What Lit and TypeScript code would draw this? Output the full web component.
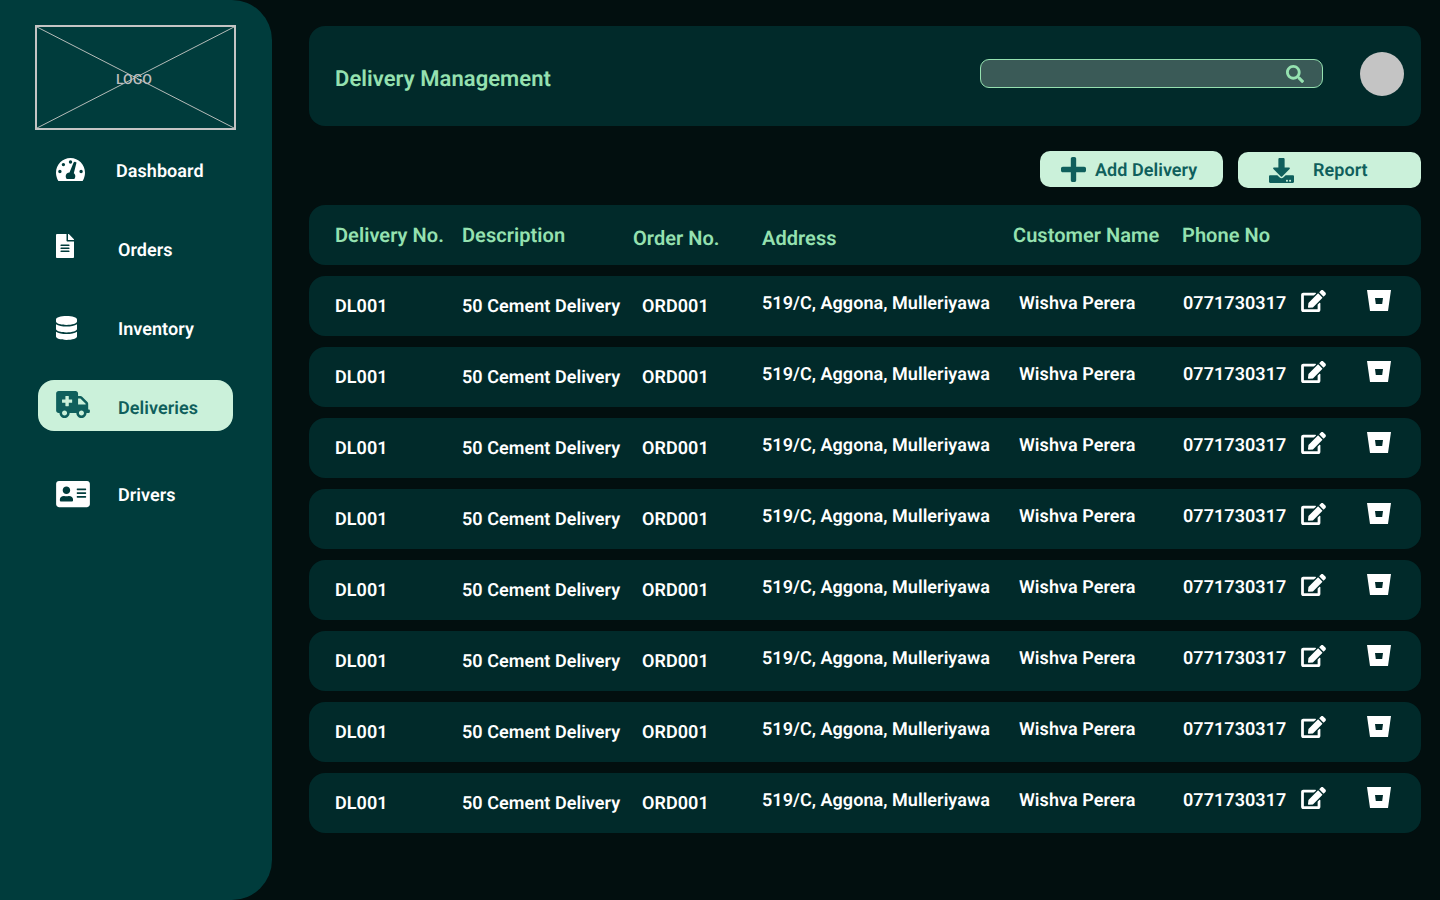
import { LitElement, html, css, svg } from 'lit';
import { customElement } from 'lit/decorators.js';

const icons = {
  gauge: svg`<path fill-rule="evenodd" d="M14.5 0C6.5 0 0 6.6 0 14.7c0 3 .9 5.900 2.400 8.300h24.200c1.500-2.400 2.400-5.300 2.400-8.300C29 6.600 22.500 0 14.500 0zM14.500 2.300a1.700 1.700 0 1 1 0 3.400 1.700 1.700 0 0 1 0-3.400zM7.400 4.900a1.700 1.700 0 1 1 0 3.400 1.700 1.700 0 0 1 0-3.400zM3.900 11.800a1.700 1.700 0 1 1 0 3.400 1.700 1.700 0 0 1 0-3.400zM25.100 11.800a1.700 1.700 0 1 1 0 3.400 1.700 1.700 0 0 1 0-3.400zM20.400 5.100l-2.600 10.200c.9.700 1.500 1.800 1.500 3 0 1-.4 1.900-1 2.600h-7.600c-.6-.7-1-1.600-1-2.600 0-2.100 1.700-3.800 3.800-3.800l4-9.700c.3-.8 1.200-1.100 1.900-.9.700.2 1.200.4 1 1.200z"/>`,
  file: svg`<path d="M224 136V0H24C10.700 0 0 10.700 0 24v464c0 13.300 10.700 24 24 24h336c13.300 0 24-10.700 24-24V160H248c-13.200 0-24-10.800-24-24zm64 236c0 6.600-5.400 12-12 12H108c-6.600 0-12-5.400-12-12v-8c0-6.600 5.400-12 12-12h168c6.600 0 12 5.400 12 12v8zm0-64c0 6.600-5.400 12-12 12H108c-6.600 0-12-5.400-12-12v-8c0-6.600 5.400-12 12-12h168c6.600 0 12 5.400 12 12v8zm0-72v8c0 6.600-5.400 12-12 12H108c-6.600 0-12-5.400-12-12v-8c0-6.600 5.400-12 12-12h168c6.600 0 12 5.400 12 12zm96-114.100v6.100H256V0h6.100c6.400 0 12.500 2.500 17 7l97.900 98c4.500 4.500 7 10.600 7 16.900z"/>`,
  database: svg`<path d="M448 73.143v45.714C448 159.143 347.667 192 224 192S0 159.143 0 118.857V73.143C0 32.857 100.333 0 224 0s224 32.857 224 73.143zM448 176v102.857C448 319.143 347.667 352 224 352S0 319.143 0 278.857V176c48.125 33.143 136.208 48.572 224 48.572S399.874 209.143 448 176zm0 160v102.857C448 479.143 347.667 512 224 512S0 479.143 0 438.857V336c48.125 33.143 136.208 48.572 224 48.572S399.874 369.143 448 336z"/>`,
  ambulance: svg`<path d="M624 352h-16V243.900c0-12.700-5.100-24.900-14.100-33.900L494 110.100c-9-9-21.200-14.100-33.900-14.100H416V48c0-26.500-21.500-48-48-48H48C21.500 0 0 21.500 0 48v320c0 26.500 21.500 48 48 48h16c0 53 43 96 96 96s96-43 96-96h128c0 53 43 96 96 96s96-43 96-96h48c8.800 0 16-7.200 16-16v-32c0-8.800-7.200-16-16-16zM160 464c-26.500 0-48-21.500-48-48s21.500-48 48-48 48 21.500 48 48-21.500 48-48 48zm144-248c0 4.400-3.600 8-8 8h-56v56c0 4.400-3.600 8-8 8h-48c-4.400 0-8-3.600-8-8v-56h-56c-4.400 0-8-3.600-8-8v-48c0-4.400 3.600-8 8-8h56v-56c0-4.400 3.600-8 8-8h48c4.400 0 8 3.600 8 8v56h56c4.400 0 8 3.600 8 8v48zm176 248c-26.500 0-48-21.500-48-48s21.500-48 48-48 48 21.500 48 48-21.500 48-48 48zm80-208H416V144h44.100l99.900 99.900V256z"/>`,
  card: svg`<path d="M528 32H48C21.500 32 0 53.500 0 80v352c0 26.500 21.500 48 48 48h480c26.500 0 48-21.500 48-48V80c0-26.500-21.500-48-48-48zm-352 96c35.300 0 64 28.700 64 64s-28.700 64-64 64-64-28.700-64-64 28.700-64 64-64zm112 236.800c0 10.600-10 19.200-22.400 19.200H86.400C74 384 64 375.400 64 364.800v-19.200c0-31.800 30.100-57.600 67.200-57.600h5c12.300 5.100 25.700 8 39.800 8s27.600-2.900 39.800-8h5c37.100 0 67.200 25.800 67.200 57.600v19.200zM512 312c0 4.400-3.600 8-8 8H360c-4.400 0-8-3.600-8-8v-16c0-4.400 3.600-8 8-8h144c4.400 0 8 3.600 8 8v16zm0-64c0 4.400-3.600 8-8 8H360c-4.400 0-8-3.600-8-8v-16c0-4.400 3.600-8 8-8h144c4.400 0 8 3.600 8 8v16zm0-64c0 4.400-3.600 8-8 8H360c-4.400 0-8-3.600-8-8v-16c0-4.400 3.600-8 8-8h144c4.400 0 8 3.600 8 8v16z"/>`,
  search: svg`<path d="M505 442.700L405.300 343c-4.500-4.500-10.600-7-17-7H372c27.600-35.300 44-79.700 44-128C416 93.100 322.900 0 208 0S0 93.100 0 208s93.100 208 208 208c48.300 0 92.700-16.400 128-44v16.300c0 6.400 2.500 12.500 7 17l99.700 99.700c9.400 9.400 24.600 9.400 33.900 0l28.300-28.300c9.400-9.400 9.400-24.600.1-34zM208 336c-70.700 0-128-57.200-128-128 0-70.700 57.200-128 128-128 70.700 0 128 57.200 128 128 0 70.700-57.200 128-128 128z"/>`,
  plus: svg`<path d="M416 208H272V64c0-17.670-14.330-32-32-32h-32c-17.670 0-32 14.330-32 32v144H32c-17.670 0-32 14.330-32 32v32c0 17.670 14.330 32 32 32h144v144c0 17.670 14.330 32 32 32h32c17.670 0 32-14.330 32-32V304h144c17.670 0 32-14.330 32-32v-32c0-17.670-14.330-32-32-32z"/>`,
  download: svg`<path d="M216 0h80c13.300 0 24 10.700 24 24v168h87.700c17.800 0 26.700 21.500 14.100 34.100L269.700 378.300c-7.500 7.500-19.800 7.500-27.300 0L90.100 226.100c-12.600-12.600-3.700-34.100 14.100-34.100H192V24c0-13.300 10.700-24 24-24zm296 376v112c0 13.300-10.700 24-24 24H24c-13.300 0-24-10.700-24-24V376c0-13.300 10.700-24 24-24h146.700l49 49c20.100 20.100 52.500 20.100 72.600 0l49-49H488c13.300 0 24 10.700 24 24zm-124 88c0-11-9-20-20-20s-20 9-20 20 9 20 20 20 20-9 20-20zm64 0c0-11-9-20-20-20s-20 9-20 20 9 20 20 20 20-9 20-20z"/>`,
  edit: svg`<path d="M402.600 83.200l90.200 90.200c3.800 3.800 3.800 10 0 13.800L274.400 405.600l-92.800 10.300c-12.400 1.400-22.900-9.100-21.500-21.500l10.300-92.800L388.800 83.200c3.800-3.800 10-3.800 13.800 0zm162-22.900l-48.800-48.800c-15.200-15.200-39.900-15.200-55.200 0l-35.400 35.400c-3.800 3.800-3.800 10 0 13.800l90.200 90.200c3.800 3.800 10 3.800 13.800 0l35.400-35.400c15.200-15.300 15.200-40 0-55.200zM384 346.200V448H64V128h229.800c3.200 0 6.200-1.300 8.500-3.500l40-40c7.600-7.600 2.200-20.500-8.500-20.500H48C21.500 64 0 85.500 0 112v352c0 26.500 21.500 48 48 48h352c26.500 0 48-21.500 48-48V306.200c0-10.700-12.900-16-20.500-8.500l-40 40c-2.200 2.300-3.500 5.300-3.500 8.500z"/>`,
  bucket: svg`<path fill-rule="evenodd" d="M0 0h24l-3 21H3zM8 8l.8 6h6.400l.8-6z"/>`,
};

const navItems = [
  { label: 'Dashboard', icon: icons.gauge, box: '0 0 29 23', cls: 'gauge' },
  { label: 'Orders', icon: icons.file, box: '0 0 384 512', cls: 'file' },
  { label: 'Inventory', icon: icons.database, box: '0 0 448 512', cls: 'db' },
  { label: 'Deliveries', icon: icons.ambulance, box: '0 0 640 512', cls: 'amb', active: true },
  { label: 'Drivers', icon: icons.card, box: '0 0 576 512', cls: 'card' },
];

const rows = Array.from({ length: 8 });

@customElement('app-root')
export class AppRoot extends LitElement {
  static styles = css`
    :host {
      display: block;
      width: 1440px;
      height: 900px;
      overflow: hidden;
      background: #020f0f;
      font-family: Roboto, sans-serif;
      font-weight: 600;
      color: #fff;
      text-rendering: geometricPrecision;
      letter-spacing: 0.05px;
    }

    .page {
      display: flex;
      height: 900px;
    }

    svg {
      display: block;
      fill: currentColor;
    }

    /* sidebar */
    .sidebar {
      flex: none;
      width: 272px;
      height: 900px;
      box-sizing: border-box;
      padding: 25px 0 0 35px;
      background: #003c3c;
      border-radius: 0 40px 40px 0;
    }

    .logo {
      display: grid;
      place-items: center;
      box-sizing: border-box;
      width: 201px;
      height: 105px;
      border: 2px solid #c4c4c4;
      color: #bdbdbd;
      font-size: 14px;
      font-weight: 500;
    }

    .logo > * {
      grid-area: 1 / 1;
    }

    .logo svg {
      width: 197px;
      height: 101px;
      fill: none;
      stroke: #b5bcb9;
      stroke-width: 1;
    }

    .logo span {
      margin: 4px 3px 0 0;
    }

    nav {
      display: grid;
      grid-template-rows: 79px 79px 77px 89px 51px;
      margin: 15px 0 0 3px;
      font-size: 18px;
    }

    .item {
      display: flex;
      align-items: center;
      box-sizing: border-box;
      width: 195px;
      height: 51px;
      padding-left: 18px;
      border-radius: 16px;
    }

    .item span {
      margin-top: 2px;
    }

    .item.active {
      background: #cbf1da;
      color: #0f5f5c;
    }

    .icon {
      flex: none;
      width: 62px;
    }

    .gauge svg {
      width: 29px;
      height: 23px;
      margin-top: -3px;
    }

    .gauge + span {
      margin-left: -2px;
    }

    .file svg {
      width: 18px;
      height: 24px;
      margin-top: -7px;
    }

    .db svg {
      width: 21px;
      height: 24px;
      margin-top: -2px;
    }

    .amb svg {
      width: 34px;
      height: 27px;
      margin-top: -3px;
    }

    .card svg {
      width: 34px;
      height: 30px;
      margin-top: -1px;
    }

    .item .amb + span {
      margin-top: 6px;
    }

    /* main column */
    main {
      flex: none;
      width: 1112px;
      margin: 26px 0 0 37px;
    }

    .topbar {
      display: flex;
      align-items: center;
      box-sizing: border-box;
      height: 100px;
      padding: 0 17px 0 26px;
      background: #012a2a;
      border-radius: 16px;
    }

    h1 {
      flex: 1;
      margin: 6px 0 0;
      color: #95e1b0;
      font-size: 22px;
      font-weight: 600;
    }

    .search {
      display: flex;
      align-items: center;
      justify-content: flex-end;
      box-sizing: border-box;
      width: 343px;
      height: 29px;
      margin: -5px 37px 0 0;
      padding-right: 18px;
      background: #3a5a57;
      border: 1px solid #95e1b0;
      border-radius: 9px;
      color: #95e1b0;
    }

    .search svg {
      width: 18px;
      height: 18px;
    }

    .avatar {
      width: 44px;
      height: 44px;
      margin-top: -4px;
      border-radius: 50%;
      background: #c4c4c4;
    }

    .actions {
      display: flex;
      justify-content: flex-end;
      gap: 15px;
      margin-top: 25px;
      color: #0f5f5c;
      font-size: 18px;
    }

    .btn {
      display: flex;
      align-items: center;
      box-sizing: border-box;
      width: 183px;
      height: 36px;
      border-radius: 10px;
      background: #cbf1da;
    }

    .btn.add {
      padding-left: 21px;
    }

    .btn.add span {
      margin-top: 2px;
    }

    .btn.add svg {
      width: 25px;
      height: 25px;
      margin-right: 9px;
    }

    .btn.report {
      margin-top: 1px;
      padding-left: 31px;
    }

    .btn.report svg {
      width: 25px;
      height: 25px;
      margin-right: 19px;
    }

    /* table */
    .table {
      display: grid;
      gap: 11px;
      margin-top: 17px;
    }

    .row {
      display: grid;
      grid-template-columns: 127px 171px 129px 251px 169px 119px 66px 1fr;
      align-items: center;
      box-sizing: border-box;
      height: 60px;
      padding-left: 26px;
      background: #012a2a;
      border-radius: 16px;
      font-size: 18px;
      white-space: nowrap;
    }

    .row.head {
      color: #95e1b0;
      font-size: 20px;
    }

    .row.head .dn {
      margin-top: 6px;
    }

    .up {
      margin-bottom: 6px;
    }

    .pl-order {
      padding-left: 9px;
    }

    .pl-name {
      padding-left: 6px;
    }

    .pl-phone {
      padding-left: 1px;
    }

    .edit {
      width: 25px;
      height: 22px;
      margin-bottom: 10px;
    }

    .bucket {
      width: 24px;
      height: 21px;
      margin-bottom: 11px;
    }
  `;

  render() {
    return html`
      <div class="page">
        <aside class="sidebar">
          <div class="logo">
            <svg viewBox="0 0 197 101" preserveAspectRatio="none">
              <path d="M0 0L197 101M197 0L0 101" />
            </svg>
            <span>LOGO</span>
          </div>
          <nav>
            ${navItems.map(
              (n) => html`
                <div class="item ${n.active ? 'active' : ''}">
                  <div class="icon ${n.cls}">
                    <svg viewBox=${n.box}>${n.icon}</svg>
                  </div>
                  <span>${n.label}</span>
                </div>
              `
            )}
          </nav>
        </aside>
        <main>
          <header class="topbar">
            <h1>Delivery Management</h1>
            <div class="search">
              <svg viewBox="0 0 512 512">${icons.search}</svg>
            </div>
            <div class="avatar"></div>
          </header>
          <div class="actions">
            <div class="btn add">
              <svg viewBox="0 32 448 448">${icons.plus}</svg>
              <span>Add Delivery</span>
            </div>
            <div class="btn report">
              <svg viewBox="0 0 512 512">${icons.download}</svg>
              <span>Report</span>
            </div>
          </div>
          <section class="table">
            <div class="row head">
              <div>Delivery No.</div>
              <div>Description</div>
              <div class="dn">Order No.</div>
              <div class="dn">Address</div>
              <div>Customer Name</div>
              <div>Phone No</div>
            </div>
            ${rows.map(
              () => html`
                <div class="row">
                  <div>DL001</div>
                  <div>50 Cement Delivery</div>
                  <div class="pl-order">ORD001</div>
                  <div class="up">519/C, Aggona, Mulleriyawa</div>
                  <div class="up pl-name">Wishva Perera</div>
                  <div class="up pl-phone">0771730317</div>
                  <svg class="edit" viewBox="0 0 576 512">${icons.edit}</svg>
                  <svg class="bucket" viewBox="0 0 24 21">${icons.bucket}</svg>
                </div>
              `
            )}
          </section>
        </main>
      </div>
    `;
  }
}
